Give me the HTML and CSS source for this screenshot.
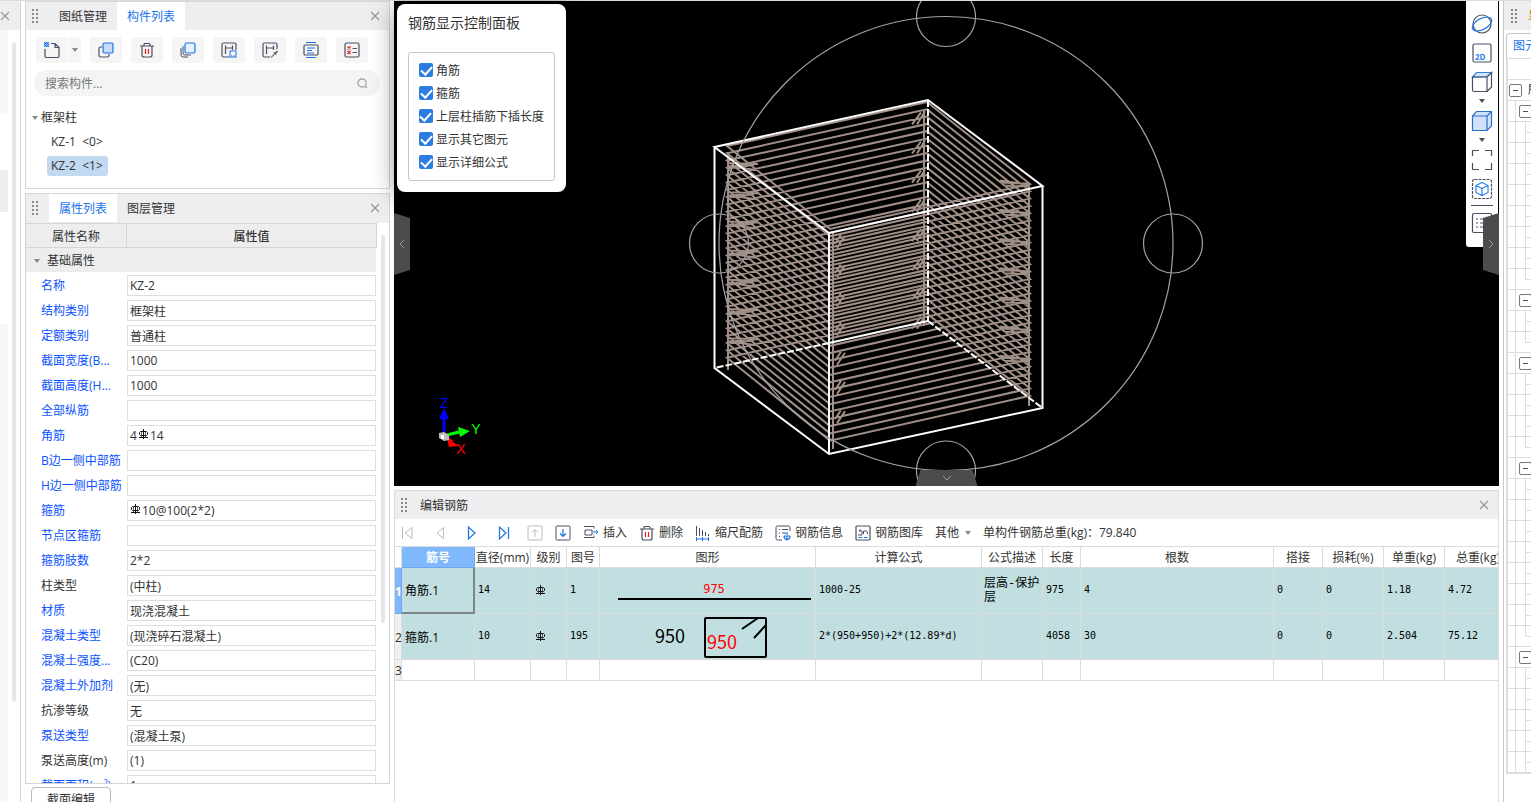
FILE: index.html
```html
<!DOCTYPE html>
<html lang="zh-CN">
<head>
    <meta charset="UTF-8">
    <title>编辑钢筋</title>
    <link rel="stylesheet" href="styles.css">
</head>
<body>
    <!-- shared icons -->
    <svg class="defs" width="0" height="0">
        <symbol id="close" viewBox="0 0 10 10"><path d="M1 1l8 8M9 1l-8 8" fill="none" stroke="#999" stroke-width="1.2"/></symbol>
        <symbol id="caret" viewBox="0 0 6 4"><path d="M0 0h6l-3 4z" fill="#888"/></symbol>
        <symbol id="trash" viewBox="0 0 16 16"><path d="M1 4h14M5 4V2.500q0-1 1-1h4q1 0 1 1V4M3 4v9q0 2 2 2h6q2 0 2-2V4" fill="none" stroke="#4a5064" stroke-width="1.200"/><path d="M6.500 7v5M9.500 7v5" stroke="#e02020" stroke-width="1.200"/></symbol>
        <symbol id="rebar" viewBox="0 0 11 11"><path d="M5.500 0v10M1 8.500h9M2.500 2.500h6l1 1v2l-1 1h-6l-1-1v-2z" fill="none" stroke="#111"/><path d="M3.500 2v6M7.500 2v6" stroke="#333" stroke-width=".8"/></symbol>
    </svg>

    <div class="app">
        <aside class="dock-left">
            <div class="dock-head">
                <button class="icon-btn" aria-label="关闭"><svg width="10" height="10"><use href="#close"/></svg></button>
            </div>
            <div class="dock-body">
                <div class="nav-strip">
                    <span class="nav-a"></span>
                    <span class="nav-b"></span>
                    <span class="nav-c"></span>
                </div>
                <span class="thumb"></span>
            </div>
        </aside>

        <div class="panels">
            <section class="panel components">
                <div class="panel-head">
                    <span class="grip"></span>
                    <button class="tab">图纸管理</button>
                    <button class="tab active">构件列表</button>
                    <button class="icon-btn close" aria-label="关闭"><svg width="10" height="10"><use href="#close"/></svg></button>
                </div>
                <div class="tools">
                    <div class="split">
                        <button class="tool" aria-label="新建"><svg width="16" height="16" viewBox="0 0 16 16"><path d="M7 1.500h4l4 4V14q0 1.500-1.500 1.500h-11Q1 15.500 1 14V7M11 1.500v4h4" fill="none" stroke="#4a5064" stroke-width="1.200"/><path d="M0 0h5v5H0z" fill="#8fbcf5"/><path d="M0 0l5 5M5 0L0 5M2.500 0L5 2.500 2.500 5 0 2.500z" fill="none" stroke="#1a73e8" stroke-width=".8"/></svg></button>
                        <button class="tool narrow" aria-label="更多"><svg width="6" height="4"><use href="#caret"/></svg></button>
                    </div>
                    <button class="tool" aria-label="复制"><svg width="16" height="16" viewBox="0 0 16 16"><path d="M4 5H2.500Q1 5 1 6.500v7Q1 15 2.500 15h7q1.500 0 1.500-1.500V12" fill="none" stroke="#4a5064" stroke-width="1.200"/><rect x="5" y="1" width="10" height="10" rx="1.500" fill="#c7dcf8" stroke="#1a73e8" stroke-width="1.200"/></svg></button>
                    <button class="tool" aria-label="删除"><svg width="16" height="16"><use href="#trash"/></svg></button>
                    <button class="tool" aria-label="层间复制"><svg width="16" height="16" viewBox="0 0 16 16"><path d="M1 6v7q0 2 2 2h5M3 4v7q0 2 2 2h6" fill="none" stroke="#4a5064"/><rect x="5" y="1" width="10" height="10" rx="1.500" fill="#e6f1ff" stroke="#1a73e8" stroke-width="1.200"/></svg></button>
                    <button class="tool" aria-label="构件存档"><svg width="16" height="16" viewBox="0 0 16 16"><path d="M8 15H2.500Q1 15 1 13.500v-11Q1 1 2.500 1h11Q15 1 15 2.500V8M4.500 12V3.500M4.500 6h7M11.500 3.500V8" fill="none" stroke="#4a5064" stroke-width="1.200"/><rect x="9" y="9" width="6" height="6" fill="#fff" stroke="#1a73e8"/><path d="M10 12.500l2 1.500 2-1.500V15h-4z" fill="#73a9ef"/></svg></button>
                    <button class="tool" aria-label="构件提取"><svg width="16" height="16" viewBox="0 0 16 16"><path d="M8 15H2.500Q1 15 1 13.500v-11Q1 1 2.500 1h11Q15 1 15 2.500V7M4.500 12V3.500M4.500 6h7M11.500 3.500V8" fill="none" stroke="#4a5064" stroke-width="1.200"/><path d="M9 15.500l4-4" stroke="#888" stroke-width="1.500"/><path d="M11 10l2 .5 2-2 1 1-2 2 .5 2z" fill="#4a5064"/></svg></button>
                    <button class="tool" aria-label="排序"><svg width="16" height="16" viewBox="0 0 16 16"><rect x="1" y="3" width="14" height="10" rx="1" fill="none" stroke="#4a5064" stroke-width="1.200"/><path d="M3 .500h10M3 15.500h10M4 6h8M4 8.500h5M4 11h7" stroke="#1a73e8"/></svg></button>
                    <button class="tool" aria-label="检查"><svg width="16" height="16" viewBox="0 0 16 16"><rect x="1" y="1" width="14" height="14" rx="1.500" fill="none" stroke="#4a5064" stroke-width="1.200"/><path d="M8.500 6.500H13M8.500 10.500H13" stroke="#4a5064"/><path d="M3.500 4.500l3 3m0-3l-3 3M3.500 9l3 3m0-3l-3 3" stroke="#e02020" stroke-width="1.200"/></svg></button>
                </div>
                <label class="search">
                    <input type="text" placeholder="搜索构件..." aria-label="搜索构件">
                    <svg width="11" height="11" viewBox="0 0 12 12"><circle cx="5.500" cy="5.500" r="4.500" fill="none" stroke="#999" stroke-width="1.200"/><path d="M9 9l2 2" stroke="#999" stroke-width="1.200"/></svg>
                </label>
                <ul class="tree">
                    <li class="tree-root"><svg width="6" height="4"><use href="#caret"/></svg>框架柱</li>
                    <li><span class="node">KZ-1&nbsp; &lt;0&gt;</span></li>
                    <li><span class="node selected">KZ-2&nbsp; &lt;1&gt;</span></li>
                </ul>
            </section>

            <section class="panel props">
                <div class="panel-head">
                    <span class="grip"></span>
                    <button class="tab active">属性列表</button>
                    <button class="tab">图层管理</button>
                    <button class="icon-btn close" aria-label="关闭"><svg width="10" height="10"><use href="#close"/></svg></button>
                </div>
                <div class="props-body">
                    <div class="props-list">
                        <div class="props-title"><span>属性名称</span><b>属性值</b></div>
                        <div class="props-group"><svg width="6" height="4"><use href="#caret"/></svg>基础属性</div>
                        <div class="prop"><label for="p1">名称</label><input id="p1" value="KZ-2"></div>
                        <div class="prop"><label for="p2">结构类别</label><input id="p2" value="框架柱"></div>
                        <div class="prop"><label for="p3">定额类别</label><input id="p3" value="普通柱"></div>
                        <div class="prop"><label for="p4">截面宽度(B...</label><input id="p4" value="1000"></div>
                        <div class="prop"><label for="p5">截面高度(H...</label><input id="p5" value="1000"></div>
                        <div class="prop"><label for="p6">全部纵筋</label><input id="p6"></div>
                        <div class="prop"><label id="p7">角筋</label><div class="field" role="textbox" contenteditable="true" aria-labelledby="p7">4<svg width="11" height="11"><use href="#rebar"/></svg>14</div></div>
                        <div class="prop"><label for="p8">B边一侧中部筋</label><input id="p8"></div>
                        <div class="prop"><label for="p9">H边一侧中部筋</label><input id="p9"></div>
                        <div class="prop"><label id="p10">箍筋</label><div class="field" role="textbox" contenteditable="true" aria-labelledby="p10"><svg width="11" height="11"><use href="#rebar"/></svg>10@100(2*2)</div></div>
                        <div class="prop"><label for="p11">节点区箍筋</label><input id="p11"></div>
                        <div class="prop"><label for="p12">箍筋肢数</label><input id="p12" value="2*2"></div>
                        <div class="prop"><label for="p13" class="private">柱类型</label><input id="p13" value="(中柱)"></div>
                        <div class="prop"><label for="p14">材质</label><input id="p14" value="现浇混凝土"></div>
                        <div class="prop"><label for="p15">混凝土类型</label><input id="p15" value="(现浇碎石混凝土)"></div>
                        <div class="prop"><label for="p16">混凝土强度...</label><input id="p16" value="(C20)"></div>
                        <div class="prop"><label for="p17">混凝土外加剂</label><input id="p17" value="(无)"></div>
                        <div class="prop"><label for="p18" class="private">抗渗等级</label><input id="p18" value="无"></div>
                        <div class="prop"><label for="p19">泵送类型</label><input id="p19" value="(混凝土泵)"></div>
                        <div class="prop"><label for="p20" class="private">泵送高度(m)</label><input id="p20" value="(1)"></div>
                        <div class="prop"><label for="p21">截面面积(m²)</label><input id="p21" value="1"></div>
                    </div>
                    <span class="thumb"></span>
                </div>
            </section>
            <button class="section-edit">截面编辑</button>
        </div>

        <main class="main">
            <div class="viewport">
                <svg class="scene" viewBox="394 1 1105 485" preserveAspectRatio="xMidYMid slice">
                    <g id="rebars" fill="none" stroke="#a08f87" stroke-width="2"></g>
                    <g fill="none" stroke="#a08f87" stroke-width="2">
                        <path d="M728 155V370M833 232V449M924 110V326M1029 186V406"/>
                    </g>
                    <g fill="none" stroke="#fff" stroke-width="2">
                        <path d="M714.500 147L928 100L1042.500 186L829 233ZM714.500 147V368L829 454L1042.500 408V186M829 233V454M928 321L829 343"/>
                        <path d="M928 100V321M829 343L714.500 368M928 321L1042.500 408" stroke-dasharray="7 2"/>
                    </g>
                    <g fill="none" stroke="#a3a3a3" stroke-width="1.200">
                        <circle cx="946" cy="243.500" r="227"/>
                        <circle cx="946" cy="17" r="29.500"/>
                        <circle cx="719" cy="243.500" r="29.500"/>
                        <circle cx="1173" cy="243.500" r="29.500"/>
                        <circle cx="946" cy="470.500" r="29.500"/>
                    </g>
                    <!-- axes -->
                    <g>
                        <path d="M444 434V416" stroke="#00f" stroke-width="3"/>
                        <path d="M444 408l5 11h-10z" fill="#00f"/>
                        <path d="M447 435l12-3" stroke="#0f0" stroke-width="3"/>
                        <path d="M470 431l-12-4 2 10z" fill="#0f0"/>
                        <path d="M446 437l6 5" stroke="#f00" stroke-width="3"/>
                        <path d="M459 446l-12-8 2 9z" fill="#f00"/>
                        <path d="M439 433l5-1 5 3v5l-5 1-5-3z" fill="#bbb"/>
                        <path d="M441 435h3v4h-3z" fill="#fff"/>
                        <text x="444" y="408" class="axis" fill="#00f">Z</text>
                        <text x="476" y="434" class="axis" fill="#0f0">Y</text>
                        <text x="461" y="454" class="axis" fill="#f00">X</text>
                    </g>
                </svg>

                <div class="display-panel">
                    <h2>钢筋显示控制面板</h2>
                    <div class="checks">
                        <label><input type="checkbox" checked>角筋</label>
                        <label><input type="checkbox" checked>箍筋</label>
                        <label><input type="checkbox" checked>上层柱插筋下插长度</label>
                        <label><input type="checkbox" checked>显示其它图元</label>
                        <label><input type="checkbox" checked>显示详细公式</label>
                    </div>
                </div>

                <div class="view-tools">
                    <button aria-label="动态观察"><svg width="22" height="22" viewBox="0 0 22 22"><circle cx="11" cy="11" r="9" fill="none" stroke="#4a5064" stroke-width="1.200"/><ellipse cx="11" cy="11" rx="10.500" ry="5.500" transform="rotate(-28 11 11)" fill="none" stroke="#2f80ed" stroke-width="1.400"/></svg></button>
                    <button aria-label="二维"><svg width="20" height="20" viewBox="0 0 20 20"><rect x="1" y="1" width="18" height="18" rx="1.500" fill="none" stroke="#4a5064" stroke-width="1.200"/><text x="3" y="17" class="two-d">2D</text></svg></button>
                    <button aria-label="视图"><svg width="22" height="22" viewBox="0 0 22 22"><path d="M1.500 6l4-4.500h15L16 6z" fill="#d4e5fb" stroke="#2f80ed" stroke-width="1.200"/><path d="M16 6v14.500H3q-1.500 0-1.500-1.500V6H16l4.500-4.500V16L16 20.500" fill="none" stroke="#4a5064" stroke-width="1.200"/></svg></button>
                    <button class="drop" aria-label="更多"><svg width="6" height="4" viewBox="0 0 6 4"><path d="M0 0h6l-3 4z" fill="#4a5064"/></svg></button>
                    <button aria-label="实体"><svg width="22" height="22" viewBox="0 0 22 22"><path d="M1.500 6l4-4.500h15V16L16 20.500H1.500zM1.500 6H16v14.500M16 6l4.500-4.500" fill="#d0e2fb" stroke="#2f70c8" stroke-width="1.200"/></svg></button>
                    <button class="drop" aria-label="更多"><svg width="6" height="4" viewBox="0 0 6 4"><path d="M0 0h6l-3 4z" fill="#4a5064"/></svg></button>
                    <button aria-label="全屏"><svg width="22" height="22" viewBox="0 0 22 22"><path d="M1.500 7V1.500H8M14 1.500h6.500V7M20.500 14v6.500H14M8 20.500H1.500V14" fill="none" stroke="#4a5064" stroke-width="1.200"/></svg></button>
                    <button aria-label="局部三维"><svg width="22" height="22" viewBox="0 0 22 22"><rect x="1.500" y="1.500" width="19" height="19" rx="2" fill="none" stroke="#4a5064" stroke-width="1.200" stroke-dasharray="3 1"/><path d="M11 4.500l6 3v7l-6 3-6-3v-7zM5 7.500l6 3 6-3M11 10.500v7" fill="none" stroke="#2f80ed" stroke-width="1.200"/></svg></button>
                    <hr>
                    <button aria-label="显示设置"><svg width="22" height="22" viewBox="0 0 22 22"><rect x="1.500" y="1.500" width="19" height="19" rx="1.500" fill="none" stroke="#4a5064" stroke-width="1.200"/><path d="M5 7h2M9 7h8M5 11h2M9 11h8M5 15h2M9 15h8" stroke="#4a5064" stroke-width="1.200"/></svg></button>
                </div>

                <button class="fold fold-left" aria-label="收起左侧"><svg width="6" height="10" viewBox="0 0 6 10"><path d="M5 1L1 5l4 4" fill="none" stroke="#999"/></svg></button>
                <button class="fold fold-right" aria-label="收起右侧"><svg width="6" height="10" viewBox="0 0 6 10"><path d="M1 1l4 4-4 4" fill="none" stroke="#999"/></svg></button>
                <button class="fold fold-bottom" aria-label="收起下方"><svg width="10" height="6" viewBox="0 0 10 6"><path d="M1 1l4 4 4-4" fill="none" stroke="#999"/></svg></button>
            </div>

            <section class="editor">
                <div class="panel-head">
                    <span class="grip"></span>
                    <h2>编辑钢筋</h2>
                    <button class="icon-btn close" aria-label="关闭"><svg width="10" height="10"><use href="#close"/></svg></button>
                </div>
                <div class="toolbar">
                    <div class="pager">
                        <button aria-label="首行"><svg width="16" height="16" viewBox="0 0 16 16"><path d="M2.500 2v12M12 2.500v11L5 8z" fill="none" stroke="#bbb"/></svg></button>
                        <button aria-label="上一行"><svg width="16" height="16" viewBox="0 0 16 16"><path d="M11.500 2.500v11L5 8z" fill="none" stroke="#bbb"/></svg></button>
                        <button aria-label="下一行"><svg width="16" height="16" viewBox="0 0 16 16"><path d="M4.500 2v12L11 8z" fill="none" stroke="#1a73e8" stroke-width="1.200"/></svg></button>
                        <button aria-label="末行"><svg width="16" height="16" viewBox="0 0 16 16"><path d="M3.500 2v12L10 8zM12.500 2v12" fill="none" stroke="#1a73e8" stroke-width="1.200"/></svg></button>
                    </div>
                    <div class="movers">
                        <button aria-label="上移"><svg width="16" height="16" viewBox="0 0 16 16"><rect x="1" y="1" width="14" height="14" rx="1" fill="none" stroke="#bbb"/><path d="M8 12V5M5 7.500l3-3 3 3" fill="none" stroke="#bbb"/></svg></button>
                        <button aria-label="下移"><svg width="16" height="16" viewBox="0 0 16 16"><rect x="1" y="1" width="14" height="14" rx="1" fill="none" stroke="#4a5064"/><path d="M8 4v7M5 8.500l3 3 3-3" fill="none" stroke="#1a73e8" stroke-width="1.200"/></svg></button>
                    </div>
                    <button><svg width="16" height="16" viewBox="0 0 16 16"><path d="M11 1.500H1M1 12.500h10M9 5H2v5h7" fill="none" stroke="#4a5064"/><path d="M11 1.500v2M11 10.500v2M9 5v5" stroke="#4a5064"/><path d="M10 7h5M13 5l2 2-2 2" fill="none" stroke="#1a73e8"/></svg>插入</button>
                    <button><svg width="16" height="16"><use href="#trash"/></svg>删除</button>
                    <button><svg width="16" height="16" viewBox="0 0 16 16"><path d="M1.500 1v10M4.500 3v8M7.500 5v6M10.500 7v4M13.500 9v2" stroke="#4a5064"/><path d="M1 14h13M1.500 12v4M7.500 12v4M13.500 12v4" stroke="#1a73e8"/></svg>缩尺配筋</button>
                    <button><svg width="16" height="16" viewBox="0 0 16 16"><path d="M7 15H2.500Q1 15 1 13.500v-11Q1 1 2.500 1h11Q15 1 15 2.500V6M4 4.500h1M7 4.500h6M4 8h1M7 8h4M4 11.500h1" fill="none" stroke="#4a5064"/><path d="M12 7v3M9 11h6M12 11v4M9 11q0 3 3 4 3-1 3-4" fill="none" stroke="#1a73e8" stroke-width="1.200"/></svg>钢筋信息</button>
                    <button><svg width="16" height="16" viewBox="0 0 16 16"><rect x="1" y="1" width="14" height="14" rx="1" fill="none" stroke="#4a5064" stroke-width="1.200"/><path d="M3 10h4V6H4M5 4v2M8.500 9V6h2.500q1.500 0 1.500 1.500V9" fill="none" stroke="#4a5064"/><path d="M3.500 12.500h4M9 12.500h3.500" stroke="#1a73e8"/></svg>钢筋图库</button>
                    <button class="other">其他<svg width="6" height="4"><use href="#caret"/></svg></button>
                    <span class="total">单构件钢筋总重(kg)：79.840</span>
                </div>
                <div class="grid-wrap">
                    <table class="grid">
                        <colgroup>
                            <col class="w-num"><col class="w-name"><col class="w-dia"><col class="w-lvl"><col class="w-pic"><col class="w-shape"><col class="w-calc"><col class="w-desc"><col class="w-len"><col class="w-count"><col class="w-lap"><col class="w-61"><col class="w-61"><col class="w-sum">
                        </colgroup>
                        <thead>
                            <tr><th></th><th class="current">筋号</th><th>直径(mm)</th><th>级别</th><th>图号</th><th>图形</th><th>计算公式</th><th>公式描述</th><th>长度</th><th>根数</th><th>搭接</th><th>损耗(%)</th><th>单重(kg)</th><th>总重(kg)</th></tr>
                        </thead>
                        <tbody>
                            <tr class="filled">
                                <th class="current">1</th>
                                <td class="name focus">角筋.1</td><td>14</td>
                                <td class="level"><svg width="11" height="11"><use href="#rebar"/></svg></td>
                                <td>1</td>
                                <td class="shape"><svg width="215" height="45" viewBox="0 0 215 45"><text x="114" y="25" class="dim small">975</text><path d="M18 31h193" stroke="#000" stroke-width="2"/></svg></td>
                                <td>1000-25</td><td class="desc">层高-保护层</td><td>975</td><td>4</td><td>0</td><td>0</td><td>1.18</td><td>4.72</td>
                            </tr>
                            <tr class="filled">
                                <th>2</th>
                                <td class="name">箍筋.1</td><td>10</td>
                                <td class="level"><svg width="11" height="11"><use href="#rebar"/></svg></td>
                                <td>195</td>
                                <td class="shape"><svg width="215" height="45" viewBox="0 0 215 45"><text x="70" y="29" class="dim black">950</text><text x="122" y="35" class="dim">950</text><rect x="105" y="4" width="61" height="39" rx="1" fill="none" stroke="#000" stroke-width="2"/><path d="M142 15l16-11M154 24l12-13" stroke="#000" stroke-width="2"/></svg></td>
                                <td>2*(950+950)+2*(12.89*d)</td><td class="desc"></td><td>4058</td><td>30</td><td>0</td><td>0</td><td>2.504</td><td>75.12</td>
                            </tr>
                            <tr class="blank">
                                <th>3</th><td></td><td></td><td></td><td></td><td></td><td></td><td></td><td></td><td></td><td></td><td></td><td></td><td></td>
                            </tr>
                        </tbody>
                    </table>
                </div>
            </section>
        </main>

        <aside class="dock-right">
            <div class="dock-head"><span class="grip"></span><span class="dock-title">显示</span></div>
            <div class="dock-tabs"><button>图元</button></div>
            <div class="rows" id="rows"></div>
        </aside>
    </div>

    <script src="script.js"></script>
</body>
</html>
```

FILE: script.js
```js
// Stirrups: one closed loop every 7.3 units down the column
const rebars = document.getElementById('rebars');
let path = '';
for (let i = 0; i < 30; i++) {
    const y = i * 7.3;
    path += `M727 ${146 + y}L927 ${102 + y}L1030 ${184 + y}L830 ${229 + y}Z`;

    // the hook moves to the next corner with each stirrup
    if (i % 4 === 0 && i < 28) {
        path += `M728 ${163 + y}l30 1M728 ${166 + y}l28 4M730 ${168 + y}l24 -3`;
    } else if (i % 4 === 1) {
        path += `M912 ${117 + y}l9 -12M917 ${117 + y}l8 -13`;
    } else if (i % 4 === 2) {
        path += `M1000 ${166 + y}l30 4M1000 ${168 + y}l28 1M1004 ${171 + y}l26 1`;
    } else if (i % 4 === 3) {
        path += `M835 ${222 + y}l6 -9M837 ${226 + y}l8 -12`;
    }
}
rebars.innerHTML = `<path d="${path}"/>`;

// Element tree on the right: rows that open a group
const rows = document.getElementById('rows');
const groups = [2, 11, 14, 19, 28];
for (let i = 0; i < 34; i++) {
    const row = document.createElement('div');
    row.className = 'row';
    if (i === 1) {
        row.classList.add('root');
        row.innerHTML = '<button aria-label="折叠"></button><span>所有构件</span>';
    } else if (groups.includes(i)) {
        row.classList.add('group');
        row.innerHTML = '<button aria-label="折叠"></button>';
    } else if (i > 2) {
        row.classList.add(groups.includes(i + 1) ? 'last-leaf' : 'leaf');
    }
    rows.appendChild(row);
}
```

FILE: styles.css
```css
* {
    margin: 0;
    padding: 0;
    box-sizing: border-box;
}

body {
    height: 100vh;
    overflow: hidden;
    background: #fff;
    color: #333;
    font: 12px/18px "Open Sans", "Noto Sans CJK SC", sans-serif;
}

button, input {
    font: inherit;
    color: inherit;
    border: none;
    background: none;
}

button {
    cursor: pointer;
}

svg {
    display: block;
    flex: none;
}

.defs {
    position: absolute;
}

.app {
    display: flex;
    gap: 4px;
    height: 100vh;
    border-top: 1px solid #dcdcdc;
}

/* Narrow dock on the left */
.dock-left {
    flex: 0 0 21px;
    display: flex;
    flex-direction: column;
    border-right: 1px solid #d5d5d5;
}

.dock-head {
    display: flex;
    align-items: center;
    height: 29px;
    background: #eeeef0;
    overflow: hidden;
    flex: none;
}

.dock-body {
    display: flex;
    gap: 4px;
    flex: 1;
}

.nav-strip {
    display: flex;
    flex-direction: column;
    width: 8px;
}

.nav-a {
    height: 84px;
    background: #f7f7f9;
    margin-bottom: 56px;
}

.nav-b {
    height: 42px;
    background: #ececf1;
    margin-bottom: 112px;
}

.nav-c {
    flex: 1;
    background: #f7f7f9;
}

.thumb {
    width: 4px;
    height: 660px;
    margin-top: 12px;
    border-radius: 2px;
    background: #e6e6e6;
}

/* Middle panels */
.panels {
    flex: 0 0 365px;
    display: flex;
    flex-direction: column;
    min-height: 0;
}

.panel {
    border: 1px solid #d5d5d5;
    background: #fff;
}

.panel-head {
    display: flex;
    align-items: stretch;
    height: 28px;
    padding-left: 5px;
    background: #eeeef0;
}

.grip {
    align-self: center;
    flex: none;
    width: 8px;
    height: 16px;
    margin-right: 10px;
    background: radial-gradient(circle, #888 1px, transparent 1px) 0 0 / 4px 4px;
}

.tab {
    padding: 1px 10px 0;
}

.tab.active {
    background: #fff;
    color: #1a73e8;
}

.icon-btn {
    display: flex;
    align-items: center;
}

.close {
    margin-left: auto;
    padding: 0 9px;
}

.components {
    height: 188px;
    margin-bottom: 4px;
}

.tools {
    display: flex;
    gap: 9px;
    padding: 7px 10px;
}

.split {
    display: flex;
    gap: 1px;
}

.tool {
    display: flex;
    align-items: center;
    justify-content: center;
    width: 32px;
    height: 26px;
    border-radius: 3px;
    background: #f5f5f6;
}

.tool.narrow {
    width: 12px;
}

.search {
    display: flex;
    align-items: center;
    height: 26px;
    margin: 0 9px 0 8px;
    padding: 1px 12px 0 11px;
    border-radius: 13px;
    background: #f4f4f4;
}

.search input {
    flex: 1;
    outline: none;
}

.search input::placeholder {
    color: #777;
}

.tree {
    list-style: none;
    padding: 10px 6px;
}

.tree li {
    display: flex;
    align-items: center;
    height: 24px;
    padding-left: 15px;
}

.tree .tree-root {
    gap: 3px;
    padding-left: 0;
}

.node {
    height: 20px;
    line-height: 20px;
    padding: 0 5px 0 4px;
    border-radius: 3px;
}

.node.selected {
    background: #c1d9f1;
}

.props {
    flex: 1;
    display: flex;
    flex-direction: column;
    min-height: 0;
}

.props .panel-head {
    height: 29px;
    padding-bottom: 1px;
    flex: none;
}

.props-body {
    display: flex;
    gap: 4px;
    min-height: 0;
    overflow: hidden;
}

.props-list {
    flex: 0 0 351px;
}

.props-body .thumb {
    height: 388px;
}

.props-title {
    display: flex;
    height: 25px;
    line-height: 25px;
    text-align: center;
    background: #ededed;
    border: solid #d5d5d5;
    border-width: 1px 1px 1px 0;
}

.props-title span {
    width: 101px;
    border-right: 1px solid #d5d5d5;
}

.props-title b {
    flex: 1;
    font-weight: 500;
}

.props-group {
    display: flex;
    align-items: center;
    gap: 7px;
    height: 24px;
    padding: 1px 0 0 8px;
    margin: 0 1px 1px 0;
    background: #ededed;
}

.prop {
    display: flex;
    align-items: center;
    height: 25px;
    padding: 0 1px 0 15px;
}

.prop label {
    width: 86px;
    color: #0a52ff;
    white-space: nowrap;
}

.prop label.private {
    color: #333;
}

.prop input, .field {
    flex: 1;
    min-width: 0;
    height: 21px;
    padding: 0 2px;
    border: 1px solid #dedede;
    background: #fff;
}

.field {
    display: flex;
    align-items: center;
    gap: 1px;
}

.field svg {
    margin-bottom: 3px;
}

.section-edit {
    align-self: flex-start;
    flex: none;
    width: 80px;
    height: 26px;
    margin: 3px 0 -11px 6px;
    border: 1px solid #bbb;
    border-radius: 4px;
}

/* 3D view */
.main {
    flex: 1;
    min-width: 0;
    display: flex;
    flex-direction: column;
    gap: 4px;
}

.viewport {
    position: relative;
    flex: 1;
    min-height: 0;
    background: #000;
}

.scene {
    width: 100%;
    height: 100%;
}

.axis {
    font: 14px "Liberation Sans", sans-serif;
    text-anchor: middle;
}

.display-panel {
    position: absolute;
    left: 3px;
    top: 3px;
    width: 169px;
    padding: 10px 11px 11px;
    border-radius: 8px;
    background: #fff;
    box-shadow: 0 4px 24px rgba(0, 0, 0, 0.5);
}

.display-panel h2 {
    font-size: 14px;
    font-weight: 400;
    line-height: 18px;
    margin-bottom: 20px;
}

.checks {
    padding: 6px 10px;
    border: 1px solid #c8c8c8;
    border-radius: 3px;
}

.checks label {
    display: flex;
    align-items: center;
    gap: 3px;
    height: 23px;
    white-space: nowrap;
}

.checks input {
    appearance: none;
    width: 14px;
    height: 14px;
    margin-bottom: 1px;
    border-radius: 2px;
    background: #2b7de1;
    display: flex;
    justify-content: center;
}

.checks input:checked::after {
    content: "";
    width: 5px;
    height: 9px;
    margin-top: 1px;
    border: solid #fff;
    border-width: 0 2px 2px 0;
    transform: rotate(42deg);
}

.view-tools {
    position: absolute;
    top: 0;
    right: 1px;
    width: 32px;
    height: 246px;
    padding-top: 8px;
    border-radius: 0 0 3px 3px;
    background: #fff;
}

.view-tools button {
    display: flex;
    align-items: center;
    justify-content: center;
    width: 32px;
    height: 29px;
}

.view-tools .drop {
    height: 10px;
}

.view-tools hr {
    margin: 2px 5px;
    border: none;
    border-top: 1px solid #4a5064;
}

.two-d {
    font: bold 8px "Open Sans", sans-serif;
    fill: #2f80ed;
}

.fold {
    position: absolute;
    display: flex;
    align-items: center;
    justify-content: center;
    background: #4c4c4c;
}

.fold-left, .fold-right {
    top: 212px;
    width: 16px;
    height: 62px;
}

.fold-left {
    left: 0;
    clip-path: polygon(0 0, 100% 8%, 100% 92%, 0 100%);
}

.fold-right {
    right: 0;
    clip-path: polygon(0 8%, 100% 0, 100% 100%, 0 92%);
}

.fold-bottom {
    bottom: 0;
    left: 50%;
    width: 62px;
    height: 16px;
    margin-left: -31px;
    clip-path: polygon(8% 0, 92% 0, 100% 100%, 0 100%);
}

/* Rebar editor */
.editor {
    flex: 0 0 312px;
    border: solid #dcdcdc;
    border-width: 1px 1px 0;
}

.editor h2 {
    font-size: 12px;
    font-weight: 400;
    line-height: 30px;
    padding-left: 2px;
}

.toolbar {
    display: flex;
    align-items: center;
    gap: 12px;
    height: 27px;
    padding: 1px 0 0 5px;
    white-space: nowrap;
}

.toolbar button {
    display: flex;
    align-items: center;
    gap: 4px;
}

.pager {
    display: flex;
    gap: 16px;
}

.movers {
    display: flex;
    gap: 12px;
    padding-left: 3px;
}

.toolbar .other {
    gap: 6px;
}

.grid-wrap {
    overflow: hidden;
    border-top: 1px solid #dcdcdc;
}

.grid {
    width: 1117px;
    table-layout: fixed;
    border-collapse: separate;
    border-spacing: 0;
}

.w-num { width: 7px; }
.w-name { width: 73px; }
.w-dia { width: 56px; }
.w-lvl { width: 36px; }
.w-pic { width: 33px; }
.w-shape { width: 216px; }
.w-calc { width: 166px; }
.w-desc { width: 61px; }
.w-len { width: 38px; }
.w-count { width: 193px; }
.w-lap { width: 49px; }
.w-61 { width: 61px; }
.w-sum { width: 67px; }

.grid th, .grid td {
    border: solid #dcdcdc;
    border-width: 0 1px 1px 0;
    white-space: nowrap;
}

.grid th {
    height: 21px;
    padding-top: 2px;
    font-weight: 400;
}

.grid tbody th {
    background: #f0f0f0;
}

.grid .current, .grid tbody .current {
    background: #80b9fb;
    border-color: #6ba7ee;
    color: #fff;
    font-weight: 700;
}

.filled td {
    height: 46px;
    padding: 0 0 2px 3px;
    background: #c1dfe1;
    color: #000;
    font: 10px/14px "DejaVu Sans Mono", "Noto Sans CJK SC", monospace;
}

.filled td.name {
    padding: 2px 0 0 3px;
    font: 12px/14px "Open Sans", "Noto Sans CJK SC", sans-serif;
}

.filled td.focus {
    border-width: 0 2px 2px 0;
    border-color: #7f8585;
}

.filled td.level {
    padding: 0 0 0 4px;
}

.filled td.shape {
    padding: 0;
}

.filled td.desc {
    padding: 0 0 2px 2px;
    font-size: 12px;
    white-space: normal;
}

.blank td {
    height: 21px;
}

.dim {
    font: 18px "Noto Sans CJK SC", sans-serif;
    text-anchor: middle;
    fill: #f00;
}

.dim.small {
    font: 12px "DejaVu Sans Mono", monospace;
}

.dim.black {
    fill: #000;
}

/* Element tree dock */
.dock-right {
    flex: 0 0 28px;
    display: flex;
    flex-direction: column;
    overflow: hidden;
    border-left: 1px solid #c8c8c8;
    white-space: nowrap;
}

.dock-right .dock-head {
    padding-left: 6px;
}

.dock-title {
    color: #e07b00;
}

.dock-tabs {
    height: 28px;
    padding: 3px 0 0 2px;
}

.dock-tabs button {
    height: 25px;
    padding: 0 6px;
    border: 1px solid #c8c8c8;
    border-bottom: none;
    border-radius: 4px 0 0 0;
    color: #1a73e8;
}

.rows {
    margin-left: 2px;
    border: solid #dcdcdc;
    border-width: 1px 0 1px 2px;
}

.row {
    display: flex;
    align-items: center;
    height: 21px;
    border-bottom: 1px solid #dcdcdc;
    background: linear-gradient(#dcdcdc, #dcdcdc) 7px 0 / 1px 100% no-repeat;
}

.row:first-child, .row.root {
    background: none;
}

.row.leaf, .row.last-leaf {
    background: linear-gradient(#dcdcdc, #dcdcdc) 7px 0 / 1px 100% no-repeat,
        linear-gradient(#dcdcdc, #dcdcdc) 17px 0 / 1px 100% no-repeat,
        linear-gradient(#dcdcdc, #dcdcdc) 17px 10px / 8px 1px no-repeat;
}

.row.last-leaf {
    background-size: 1px 100%, 1px 10px, 8px 1px;
}

.row button {
    flex: none;
    width: 13px;
    height: 13px;
    margin-left: 1px;
    border: 1px solid #777;
    border-radius: 2px;
    background: linear-gradient(#4a5064, #4a5064) center / 5px 1px no-repeat #fff;
}

.row.group button {
    margin-left: 11px;
}

.row span {
    margin-left: 6px;
}
```
